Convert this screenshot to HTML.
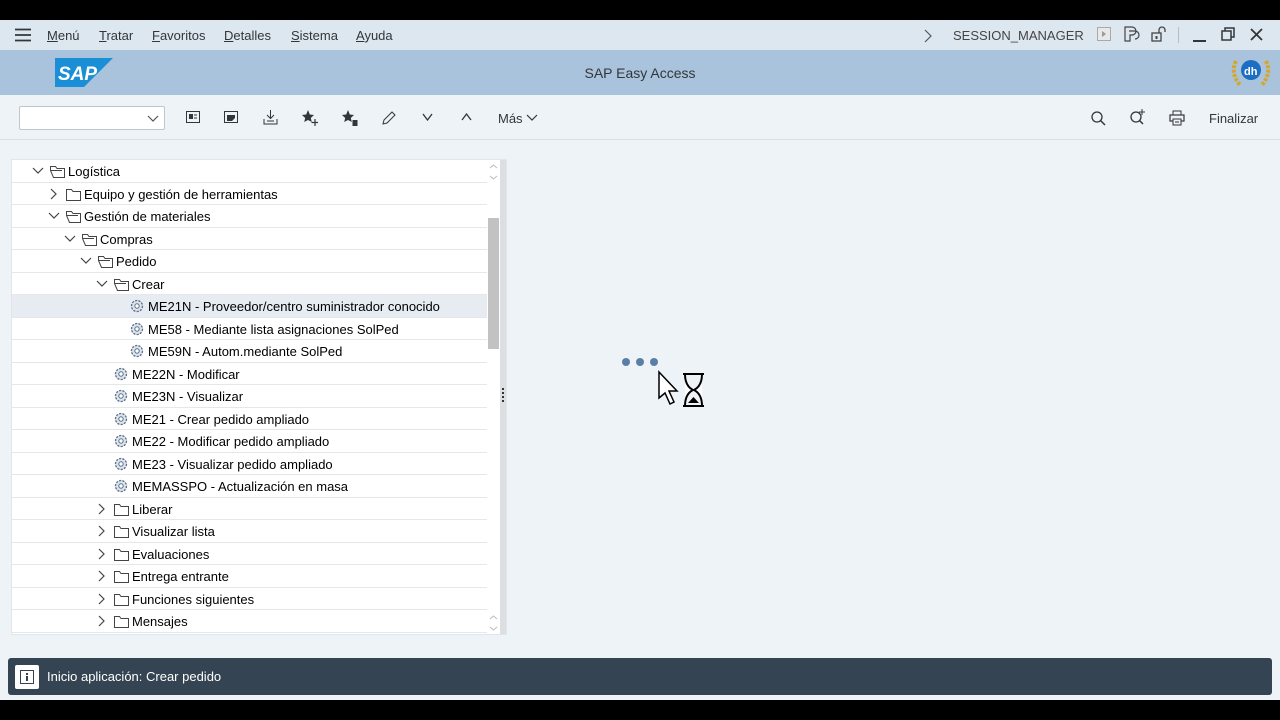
<!DOCTYPE html>
<html><head><meta charset="utf-8"><style>
*{margin:0;padding:0;box-sizing:border-box}
body{width:1280px;height:720px;background:#000;font-family:"Liberation Sans",sans-serif;position:relative;overflow:hidden;color:#32363a}
.abs{position:absolute}
#page{left:0;top:20px;width:1280px;height:680px;background:#eef3f7}
#menu{left:0;top:20px;width:1280px;height:30px;background:#dde7f0;font-size:13px;color:#32363a}
#menu span{position:absolute;top:8px}
#menu u{text-decoration:underline}
#hdr{left:0;top:50px;width:1280px;height:45px;background:#a9c3dc}
#tb{left:0;top:95px;width:1280px;height:45px;background:#eef3f7;border-bottom:1px solid #d9dfe5}
.row{position:absolute;left:12px;width:475px;height:22.5px;border-bottom:1px solid #e5e8eb;font-size:13px;color:#000}
.row span{position:absolute;top:4px;white-space:nowrap}
.sel{background:#e6ecf2}
svg{position:absolute}
</style></head><body>
<div class="abs" id="page"></div>
<div class="abs" id="menu">
<svg style="left:15px;top:8px" width="16" height="14"><path d="M0 1.5H16M0 7H16M0 12.5H16" stroke="#32363a" stroke-width="1.8"/></svg>
<span style="left:47px"><u>M</u>enú</span><span style="left:99px"><u>T</u>ratar</span><span style="left:152px"><u>F</u>avoritos</span><span style="left:224px"><u>D</u>etalles</span><span style="left:291px"><u>S</u>istema</span><span style="left:356px"><u>A</u>yuda</span>
<svg style="left:923px;top:9px" width="10" height="14"><path d="M2 1L8 7L2 13" stroke="#555" fill="none" stroke-width="1.2"/></svg>
<span style="left:953px;color:#444">SESSION_MANAGER</span>
<svg style="left:1097px;top:7px" width="14" height="14"><rect x="0.5" y="0.5" width="13" height="13" fill="#e8e8e8" stroke="#aaa"/><path d="M5 4L9 7L5 10Z" fill="#999"/></svg>
<svg style="left:1124px;top:6px" width="16" height="16"><path d="M1 1H8A4 4 0 0 1 8 9H6V15H1Z M5 5H11A4 4 0 0 1 11 13" stroke="#444" fill="none" stroke-width="1.2"/></svg>
<svg style="left:1151px;top:6px" width="16" height="16"><rect x="1" y="7" width="9" height="8" fill="none" stroke="#444" stroke-width="1.3"/><path d="M8 7V4A3 3 0 0 1 14 4V6" stroke="#444" fill="none" stroke-width="1.3"/><rect x="4.5" y="10" width="2" height="3" fill="#444"/></svg>
<div class="abs" style="left:1178px;top:7px;width:1px;height:16px;background:#bbb"></div>
<div class="abs" style="left:1193px;top:20px;width:13px;height:2px;background:#32363a"></div>
<svg style="left:1221px;top:7px" width="14" height="14"><rect x="1" y="4" width="9" height="9" fill="none" stroke="#32363a" stroke-width="1.5"/><path d="M4 4V1H13V10H10" stroke="#32363a" fill="none" stroke-width="1.5"/></svg>
<svg style="left:1250px;top:8px" width="13" height="13"><path d="M1 1L12 12M12 1L1 12" stroke="#32363a" stroke-width="1.8"/></svg>
</div>
<div class="abs" id="hdr">
<svg style="left:55px;top:8px" width="58" height="29"><path d="M0 0H58L29 29H0Z" fill="#1a8fd6"/><text x="3" y="22" font-family="Liberation Sans" font-weight="bold" font-size="19" fill="#fff" font-style="italic">SAP</text></svg>
<div class="abs" style="left:0;width:1280px;top:15px;text-align:center;font-size:14px;color:#32363a">SAP Easy Access</div>
<svg style="left:1228px;top:5px" width="46" height="34"><path d="M8 6Q2 18 12 30M38 6Q44 18 34 30" stroke="#d4a62a" stroke-width="4" fill="none" stroke-dasharray="3 1.5"/><circle cx="23" cy="15" r="10" fill="#1b6ec2"/><text x="16" y="20" font-size="11" font-weight="bold" fill="#fff">dh</text></svg>
</div>
<div class="abs" id="tb">
<div class="abs" style="left:19px;top:11px;width:146px;height:24px;background:#fff;border:1px solid #bfc6cd;border-radius:2px"></div>
<svg style="left:147px;top:20px" width="12" height="8"><path d="M1 1L6 6L11 1" stroke="#555" fill="none" stroke-width="1.2"/></svg>
<svg style="left:186px;top:16px" width="14" height="12"><rect x="0.5" y="0.5" width="13" height="11" fill="none" stroke="#32363a"/><rect x="3" y="3" width="4" height="5" fill="#32363a"/><path d="M8 4H11M8 7H11" stroke="#32363a"/></svg>
<svg style="left:224px;top:16px" width="14" height="12"><rect x="0.5" y="0.5" width="13" height="11" fill="none" stroke="#32363a"/><path d="M3 4H11V7L8 10H3Z" fill="#32363a"/></svg>
<svg style="left:263px;top:15px" width="15" height="15"><path d="M7.5 0V8M4 5L7.5 8.5L11 5" stroke="#32363a" fill="none"/><path d="M1 9V14H14V9" stroke="#32363a" fill="none"/><path d="M4 11H11" stroke="#32363a"/></svg>
<svg style="left:302px;top:15px" width="16" height="16"><path d="M6 0L7.8 4.5L12 5L8.8 8L9.8 12L6 10L2.2 12L3.2 8L0 5L4.2 4.5Z" fill="#32363a"/><path d="M13 9V16M9.5 12.5H16" stroke="#32363a" stroke-width="1.2"/></svg>
<svg style="left:342px;top:15px" width="16" height="16"><path d="M6 0L7.8 4.5L12 5L8.8 8L9.8 12L6 10L2.2 12L3.2 8L0 5L4.2 4.5Z" fill="#32363a"/><rect x="10.5" y="10" width="5" height="6" fill="#32363a"/></svg>
<svg style="left:382px;top:16px" width="14" height="14"><path d="M1 13L2 9L10 1L13 4L5 12Z" stroke="#32363a" fill="none"/></svg>
<svg style="left:422px;top:18px" width="11" height="8"><path d="M1 1L5.5 7L10 1" stroke="#32363a" fill="none" stroke-width="1.3"/></svg>
<svg style="left:461px;top:18px" width="11" height="8"><path d="M1 7L5.5 1L10 7" stroke="#32363a" fill="none" stroke-width="1.3"/></svg>
<div class="abs" style="left:498px;top:16px;font-size:13px;color:#32363a">Más</div>
<svg style="left:526px;top:19px" width="12" height="8"><path d="M1 1L6 6L11 1" stroke="#32363a" fill="none" stroke-width="1.2"/></svg>
<svg style="left:1091px;top:16px" width="15" height="15"><circle cx="6" cy="6" r="5" stroke="#32363a" fill="none" stroke-width="1.3"/><path d="M9.5 9.5L14 14" stroke="#32363a" stroke-width="1.5"/></svg>
<svg style="left:1130px;top:14px" width="16" height="17"><circle cx="6" cy="8" r="5" stroke="#32363a" fill="none" stroke-width="1.3"/><path d="M9.5 11.5L13 15" stroke="#32363a" stroke-width="1.5"/><path d="M12 0V6M9 3H15" stroke="#32363a"/></svg>
<svg style="left:1169px;top:15px" width="16" height="16"><rect x="4" y="1" width="8" height="4" fill="none" stroke="#32363a"/><rect x="1" y="5" width="14" height="6" fill="none" stroke="#32363a" stroke-width="1.2"/><rect x="4" y="9" width="8" height="6" fill="#eef3f7" stroke="#32363a"/><path d="M6 12H10" stroke="#32363a"/></svg>
<div class="abs" style="left:1209px;top:16px;font-size:13px;color:#32363a">Finalizar</div>
</div>
<!-- tree panel -->
<div class="abs" style="left:11px;top:159px;width:496px;height:476px;background:#fff;border:1px solid #e2e6ea"></div>
<div class="abs" style="left:487px;top:160px;width:13px;height:474px;background:#fff"></div>
<div class="abs" style="left:488px;top:218px;width:11px;height:131px;background:#c2c2c2"></div>
<div class="abs" style="left:500px;top:160px;width:6px;height:474px;background:#dcdfe2"></div>
<div class="abs" style="left:502px;top:388px;width:2px;height:14px;border-left:2px dotted #333"></div>
<div id="tree"></div>
<!-- loading -->
<div class="abs" style="left:622px;top:358px;width:8px;height:8px;border-radius:50%;background:#5a7fa6"></div>
<div class="abs" style="left:636px;top:358px;width:8px;height:8px;border-radius:50%;background:#5a7fa6"></div>
<div class="abs" style="left:650px;top:358px;width:8px;height:8px;border-radius:50%;background:#5a7fa6"></div>
<svg style="left:656px;top:370px" width="52" height="46"><path d="M3 2L3 28L9 23L14 34L18 32L13 21L21 21Z" fill="#fff" stroke="#000" stroke-width="1.5"/><path d="M27 4H48M27 36H48M29 4Q29 16 37 20Q29 24 29 36M46 4Q46 16 38 20Q46 24 46 36" stroke="#000" fill="#fff" stroke-width="2"/><path d="M32 33L37.5 27L43 33Z" fill="#000"/></svg>
<!-- status -->
<div class="abs" style="left:8px;top:658px;width:1264px;height:37px;background:#354452;border-radius:3px"></div>
<div class="abs" style="left:15px;top:665px;width:24px;height:24px;background:#fff;border-radius:2px"></div>
<svg style="left:20px;top:670px" width="14" height="14"><rect x="0.5" y="0.5" width="13" height="13" fill="none" stroke="#354452"/><rect x="6" y="3" width="2" height="2" fill="#354452"/><rect x="6" y="6" width="2" height="5" fill="#354452"/></svg>
<div class="abs" style="left:47px;top:669px;font-size:13px;color:#fff">Inicio aplicación: Crear pedido</div>
<script>
var rows=[
[0,'v','of','Logística'],[1,'>','f','Equipo y gestión de herramientas'],[1,'v','of','Gestión de materiales'],[2,'v','of','Compras'],[3,'v','of','Pedido'],[4,'v','of','Crear'],
[5,'','g','ME21N - Proveedor/centro suministrador conocido',1],[5,'','g','ME58 - Mediante lista asignaciones SolPed'],[5,'','g','ME59N - Autom.mediante SolPed'],
[4,'','g','ME22N - Modificar'],[4,'','g','ME23N - Visualizar'],[4,'','g','ME21 - Crear pedido ampliado'],[4,'','g','ME22 - Modificar pedido ampliado'],[4,'','g','ME23 - Visualizar pedido ampliado'],[4,'','g','MEMASSPO - Actualización en masa'],
[4,'>','f','Liberar'],[4,'>','f','Visualizar lista'],[4,'>','f','Evaluaciones'],[4,'>','f','Entrega entrante'],[4,'>','f','Funciones siguientes'],[4,'>','f','Mensajes']];
var h='';
rows.forEach(function(r,i){
 var top=160+i*22.5, L=r[0], base=68+16*L;
 h+='<div class="row'+(r[4]?' sel':'')+'" style="top:'+top+'px">';
 var tx=base-12, cx=tx-30+12;
 if(r[2]=='g'){ tx=base-16+ (L==5?-4:0); }
 var textX, iconX, chevX;
 if(r[2]=='g'){ textX=(L==5?148:132)-12; iconX=textX-18; }
 else { textX=base-12; iconX=textX-18; chevX=textX-36; }
 if(r[1]=='v') h+='<svg style="left:'+chevX+'px;top:7px" width="12" height="8"><path d="M1 1L6 6L11 1" stroke="#444" fill="none" stroke-width="1.2"/></svg>';
 if(r[1]=='>') h+='<svg style="left:'+(chevX+2)+'px;top:5px" width="8" height="12"><path d="M1 1L6 6L1 11" stroke="#444" fill="none" stroke-width="1.2"/></svg>';
 if(r[2]=='f') h+='<svg style="left:'+iconX+'px;top:5px" width="15" height="13"><path d="M0.5 1.5H5.5L7 3.5H14.5V12.5H0.5Z" stroke="#444" fill="none"/></svg>';
 if(r[2]=='of') h+='<svg style="left:'+iconX+'px;top:5px" width="15" height="13"><path d="M0.5 1.5H5.5L7 3.5H14.5V12.5H3.5L0.5 5.5Z M0.5 5.5V1.5 M0.5 5.5H12" stroke="#444" fill="none"/></svg>';
 if(r[2]=='g') h+='<svg style="left:'+iconX+'px;top:4px" width="14" height="14"><circle cx="7" cy="7" r="5.5" stroke="#5a6e86" fill="#dbe4ee" stroke-width="1.3" stroke-dasharray="2.2 1.2"/><circle cx="7" cy="7" r="2.2" stroke="#5a6e86" fill="#fff"/></svg>';
 h+='<span style="left:'+textX+'px">'+r[3]+'</span></div>';
});
document.getElementById('tree').innerHTML=h;
</script>
<svg style="left:489px;top:163px" width="9" height="18"><path d="M1 5L4.5 2L8 5M1 13L4.5 16L8 13" stroke="#bbb" fill="none"/></svg>
<svg style="left:489px;top:614px" width="9" height="18"><path d="M1 5L4.5 2L8 5M1 13L4.5 16L8 13" stroke="#bbb" fill="none"/></svg>
</body></html>
